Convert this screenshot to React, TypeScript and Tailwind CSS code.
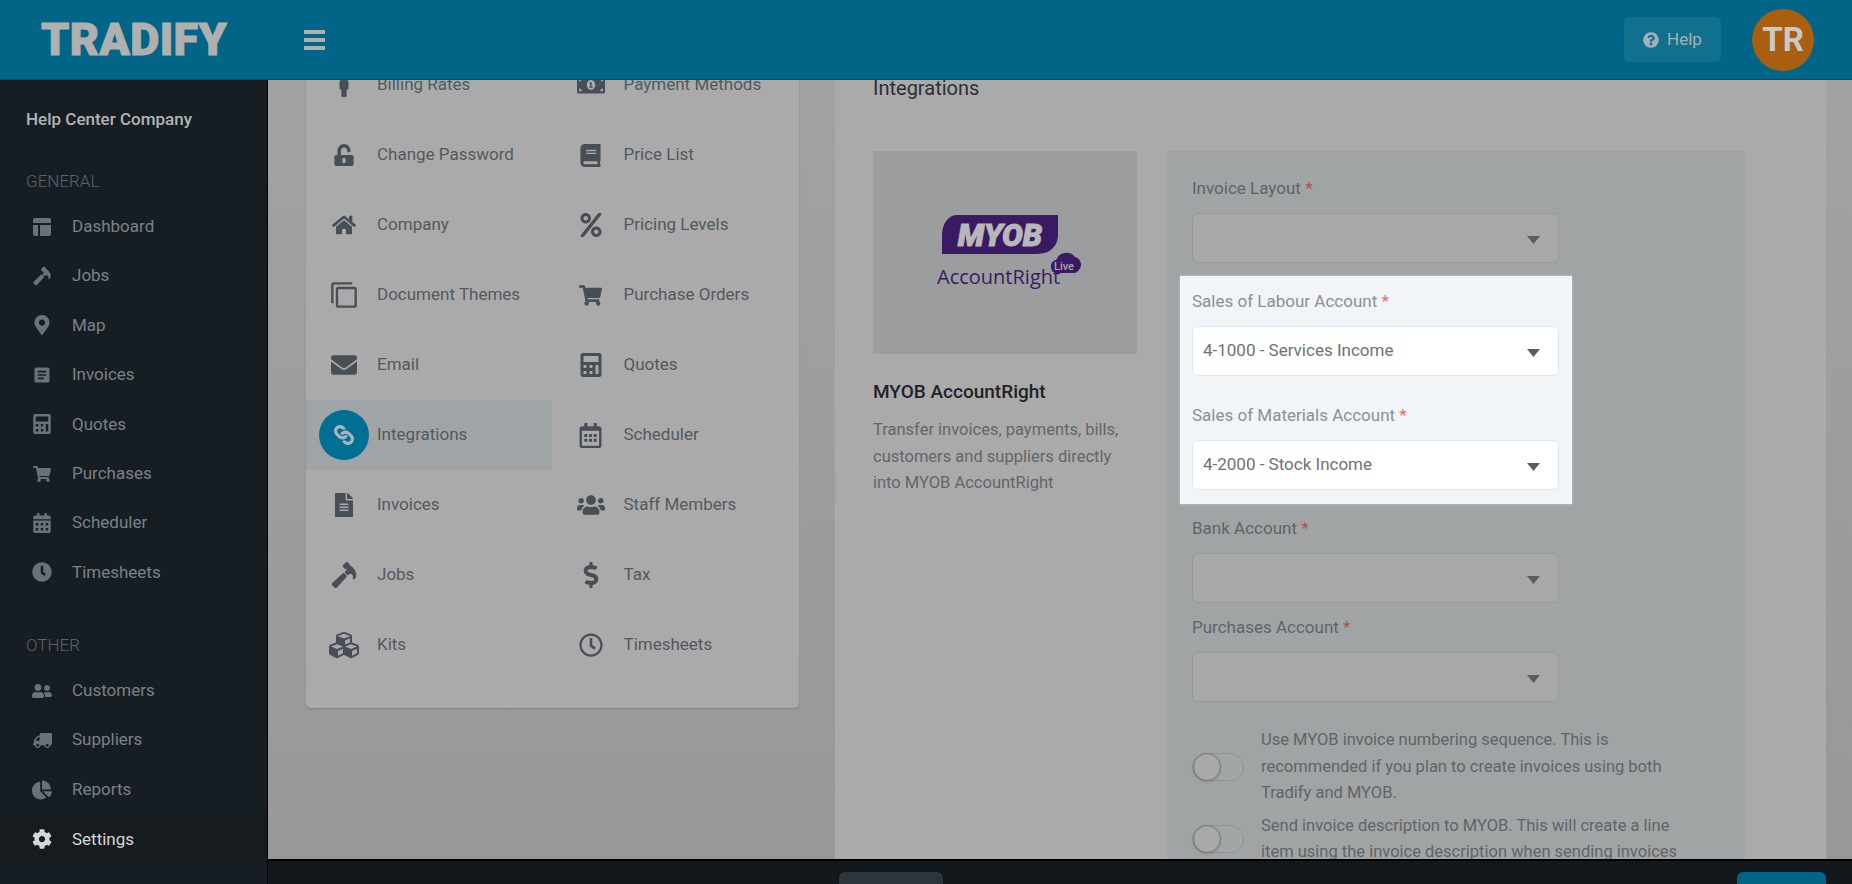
import type { ReactNode } from 'react';
import {
  FaBook, FaCalculator, FaCalendarAlt, FaChartPie, FaClock, FaCog, FaCubes, FaDollarSign, FaEnvelope,
  FaFileAlt, FaHome, FaLink, FaMale, FaMapMarkerAlt, FaMoneyBillAlt, FaPercent, FaQuestionCircle,
  FaRegCalendarAlt, FaRegClock, FaShoppingCart, FaTruck, FaUnlockAlt, FaUserFriends, FaUsers,
} from 'react-icons/fa';
import { IoHammer } from 'react-icons/io5';
import { MdArticle, MdOutlineFilterNone } from 'react-icons/md';

const Layout = () => (
  <svg viewBox="0 0 20 20" className="w-[20px] h-[20px]" fill="currentColor">
    <path d="M3 1h14a2 2 0 0 1 2 2v3H1V3a2 2 0 0 1 2-2zM1 8h5v11H3a2 2 0 0 1-2-2zM8 8h11v9a2 2 0 0 1-2 2H8z" />
  </svg>
);

const generalNav = [
  { label: 'Dashboard', icon: <Layout /> },
  { label: 'Jobs', icon: <IoHammer size={22} className="-scale-x-100 rotate-90" /> },
  { label: 'Map', icon: <FaMapMarkerAlt size={20} /> },
  { label: 'Invoices', icon: <MdArticle size={22} /> },
  { label: 'Quotes', icon: <FaCalculator size={20} /> },
  { label: 'Purchases', icon: <FaShoppingCart size={18} /> },
  { label: 'Scheduler', icon: <FaCalendarAlt size={20} /> },
  { label: 'Timesheets', icon: <FaClock size={20} /> },
];

const otherNav = [
  { label: 'Customers', icon: <FaUserFriends size={20} /> },
  { label: 'Suppliers', icon: <FaTruck size={19} className="-scale-x-100" /> },
  { label: 'Reports', icon: <FaChartPie size={20} /> },
];

const settingsCol1 = [
  { label: 'Billing Rates', icon: <FaMale size={24} /> },
  { label: 'Change Password', icon: <FaUnlockAlt size={22} /> },
  { label: 'Company', icon: <FaHome size={24} /> },
  { label: 'Document Themes', icon: <MdOutlineFilterNone size={28} className="-scale-y-100" /> },
  { label: 'Email', icon: <FaEnvelope size={26} /> },
  { label: 'Integrations', icon: <FaLink size={20} className="rotate-90 text-[#a9b4b8]" />, active: true },
  { label: 'Invoices', icon: <FaFileAlt size={24} /> },
  { label: 'Jobs', icon: <IoHammer size={28} className="-scale-x-100 rotate-90" /> },
  { label: 'Kits', icon: <FaCubes size={30} /> },
];

const settingsCol2 = [
  { label: 'Payment Methods', icon: <FaMoneyBillAlt size={28} /> },
  { label: 'Price List', icon: <FaBook size={23} /> },
  { label: 'Pricing Levels', icon: <FaPercent size={24} /> },
  { label: 'Purchase Orders', icon: <FaShoppingCart size={23} /> },
  { label: 'Quotes', icon: <FaCalculator size={24} /> },
  { label: 'Scheduler', icon: <FaRegCalendarAlt size={25} /> },
  { label: 'Staff Members', icon: <FaUsers size={28} /> },
  { label: 'Tax', icon: <FaDollarSign size={26} /> },
  { label: 'Timesheets', icon: <FaRegClock size={24} /> },
];

const NavItem = ({ label, icon }: { label: string; icon: ReactNode }) => (
  <div className="flex items-center h-[49.4px] pl-[32px] text-[#7b8186] text-[17px]">
    <span className="w-[20px] flex justify-center text-[#6a7278]">{icon}</span>
    <span className="ml-[20px]">{label}</span>
  </div>
);

const SettingsRow = ({ label, icon, active }: { label: string; icon: ReactNode; active?: boolean }) => (
  <div className={`flex items-center h-[70px] ${active ? 'bg-[#9fa5a7]' : ''}`}>
    <span className="w-[76px] flex justify-center shrink-0 text-[#474e55]">
      {active ? (
        <span className="w-[50px] h-[50px] rounded-full bg-[#006f94] flex items-center justify-center">{icon}</span>
      ) : icon}
    </span>
    <span className="-ml-[5px] text-[17px] text-[#53595e]">{label}</span>
  </div>
);

const Caret = () => (
  <svg viewBox="0 0 13 8" className="w-[13px] h-[8px] mt-[3px]" fill="#5c5c5c">
    <path d="M0 0h13L6.5 8z" />
  </svg>
);

const Field = ({ label, value, lit }: { label: string; value?: string; lit?: boolean }) => (
  <div>
    <div className={`h-6 leading-6 text-[17px] ${lit ? 'text-[#8b9094]' : 'text-[#5f6468]'}`}>
      {label} <span className={lit ? 'text-[#f06a6a]' : 'text-[#b3524c]'}>*</span>
    </div>
    <div
      className={`mt-[13px] w-[367px] h-[50px] rounded-[6px] border flex items-center justify-between pl-[10px] pr-[18px] text-[17px] ${
        lit ? 'bg-white border-[#e1e6ea] text-[#6d7277]' : 'bg-[#a8a8a8] border-[#98999a]'
      }`}
    >
      <span>{value}</span>
      <Caret />
    </div>
  </div>
);

const Toggle = () => (
  <span className="relative w-[52px] h-[28px] shrink-0 rounded-full border border-[#8f9496] bg-[#a3a6a7]">
    <span className="absolute left-0 -top-px w-[28px] h-[28px] rounded-full bg-[#a9a9a9] border border-[#777] shadow-sm" />
  </span>
);

export default function App() {
  return (
    <div className="h-screen w-full flex flex-col overflow-hidden font-['Roboto',sans-serif] bg-[#171e23]">
      <header className="h-20 shrink-0 bg-[#006587] border-b border-[#00506c] flex items-center relative z-10">
        <div className="w-[304px] pl-[41px] text-[45px] leading-none font-black tracking-[0.3px] text-[#b0b0b0] [-webkit-text-stroke:1px_#b0b0b0]">
          TRADIFY
        </div>
        <div className="flex flex-col gap-[4px] w-[21px]">
          <span className="h-[4px] bg-[#b0b0b0]" />
          <span className="h-[4px] bg-[#b0b0b0]" />
          <span className="h-[4px] bg-[#b0b0b0]" />
        </div>
        <div className="ml-auto flex items-center mr-[38px]">
          <div className="w-[97px] h-[45px] rounded-[6px] bg-[#12708f] flex items-center justify-center gap-[8px] text-[17px] text-[#a3b2b8]">
            <FaQuestionCircle size={16} />
            Help
          </div>
          <div className="ml-[31px] w-[62px] h-[62px] rounded-full bg-[#a85f10] flex items-center justify-center text-[33px] font-bold text-[#c9c9c9]">
            TR
          </div>
        </div>
      </header>

      <div className="flex flex-1 min-h-0">
        <aside className="w-[268px] shrink-0 border-r border-black bg-[#171e23] flex flex-col">
          <div className="mt-[27px] pl-[26px] h-6 leading-6 text-[17px] font-medium text-[#b1b4b6]">Help Center Company</div>
          <div className="mt-[38px] pl-[26px] h-6 leading-6 text-[17px] font-light text-[#5c6368]">GENERAL</div>
          <div className="mt-[9px]">
            {generalNav.map((n) => (
              <NavItem key={n.label} {...n} />
            ))}
          </div>
          <div className="mt-[36px] pl-[26px] h-6 leading-6 text-[17px] font-light text-[#5c6368]">OTHER</div>
          <div className="mt-[9px]">
            {otherNav.map((n) => (
              <NavItem key={n.label} {...n} />
            ))}
          </div>
          <div className="flex items-center h-[50px] pl-[32px] bg-[#151b1f] text-[17px] text-[#d6d6d6]">
            <FaCog size={20} />
            <span className="ml-[20px]">Settings</span>
          </div>
        </aside>

        <div className="flex-1 min-w-0 flex flex-col">
          <main className="flex-1 min-h-0 overflow-hidden bg-gradient-to-b from-[#a2a2a2] to-[#989898] flex pl-[38px] pr-[26px] gap-[36px] items-start">
            <section className="-mt-[30px] w-[493px] shrink-0 rounded-[5px] bg-[#aaaaaa] shadow-[0_1px_2px_#808080] pb-[28px] grid grid-cols-2">
              <div className="w-[246px]">
                {settingsCol1.map((r) => (
                  <SettingsRow key={r.label} {...r} />
                ))}
              </div>
              <div className="w-[246px]">
                {settingsCol2.map((r) => (
                  <SettingsRow key={r.label} {...r} />
                ))}
              </div>
            </section>

            <section className="-mt-[30px] w-[991px] shrink-0 bg-[#aaaaaa] pt-[24px] pl-[38px]">
              <h2 className="h-7 leading-7 text-[20px] text-[#2b2f33]">Integrations</h2>
              <div className="mt-[49px] flex gap-[30px]">
                <div className="w-[264px] shrink-0">
                  <div className="h-[203px] bg-[#9b9d9f] flex items-center justify-center">
                    <svg viewBox="0 0 145 75" className="w-[145px] h-[75px] ml-[8px]">
                      <path d="M20 0H121V20C121 30 114 39 100 39H5V20C5 8 12 0 20 0Z" fill="#3a1a63" />
                      <text x="63" y="31" textAnchor="middle" fontFamily="Roboto" fontWeight="900" fontSize="31" fontStyle="italic" fill="#b8b8b8" stroke="#b8b8b8" strokeWidth="1">MYOB</text>
                      <path d="M114 52a6 6 0 0 1 5-7 11 11 0 0 1 19-3 8 8 0 0 1 3 14 6 6 0 0 1-4 2h-18a6 6 0 0 1-5-6z" fill="#3a1a63" />
                      <text x="127" y="55" textAnchor="middle" fontFamily="Roboto" fontWeight="500" fontSize="11" fill="#a9a9a9">Live</text>
                      <text x="0" y="69" fontFamily="Open Sans" fontSize="20" fill="#3a1a63">AccountRight</text>
                    </svg>
                  </div>
                  <h3 className="mt-[26px] h-6 leading-6 text-[19px] font-medium text-[#1f2327]">MYOB AccountRight</h3>
                  <p className="mt-[13px] text-[16.5px] leading-[26.5px] text-[#62666a]">
                    Transfer invoices, payments, bills,<br />customers and suppliers directly<br />into MYOB AccountRight
                  </p>
                </div>

                <div className="w-[578px] shrink-0 bg-[#a0a4a5] pt-[25px] pl-[25px] pr-[25px]">
                  <Field label="Invoice Layout" />
                  <div className="mt-[13px] -ml-3 w-[392px] bg-[#f1f5f8] pl-3 pt-[13px] pb-[14px] flex flex-col gap-[27px] shadow-[0_0_2px_#c8cccf]">
                    <Field lit label="Sales of Labour Account" value="4-1000 - Services Income" />
                    <Field lit label="Sales of Materials Account" value="4-2000 - Stock Income" />
                  </div>
                  <div className="mt-[12px] flex flex-col gap-[12px]">
                    <Field label="Bank Account" />
                    <Field label="Purchases Account" />
                  </div>
                  <div className="mt-[25px] flex items-center gap-[17px] text-[16.5px] leading-[26.5px] text-[#5f6468]">
                    <Toggle />
                    <p className="w-[440px]">
                      Use MYOB invoice numbering sequence. This is recommended if you plan to create invoices using both Tradify and MYOB.
                    </p>
                  </div>
                  <div className="mt-[6px] flex items-center gap-[17px] text-[16.5px] leading-[26.5px] text-[#5f6468]">
                    <Toggle />
                    <p className="w-[440px]">
                      Send invoice description to MYOB. This will create a line item using the invoice description when sending invoices
                    </p>
                  </div>
                </div>
              </div>
            </section>
          </main>

          <footer className="h-[25px] shrink-0 border-t-2 border-black bg-[#13181c] relative z-10 flex items-end pl-[571px] pr-[26px] justify-between">
            <div className="w-[104px] h-[12px] rounded-t-[6px] bg-[#2c343c]" />
            <div className="w-[89px] h-[12px] rounded-t-[6px] bg-[#006587]" />
          </footer>
        </div>
      </div>
    </div>
  );
}
